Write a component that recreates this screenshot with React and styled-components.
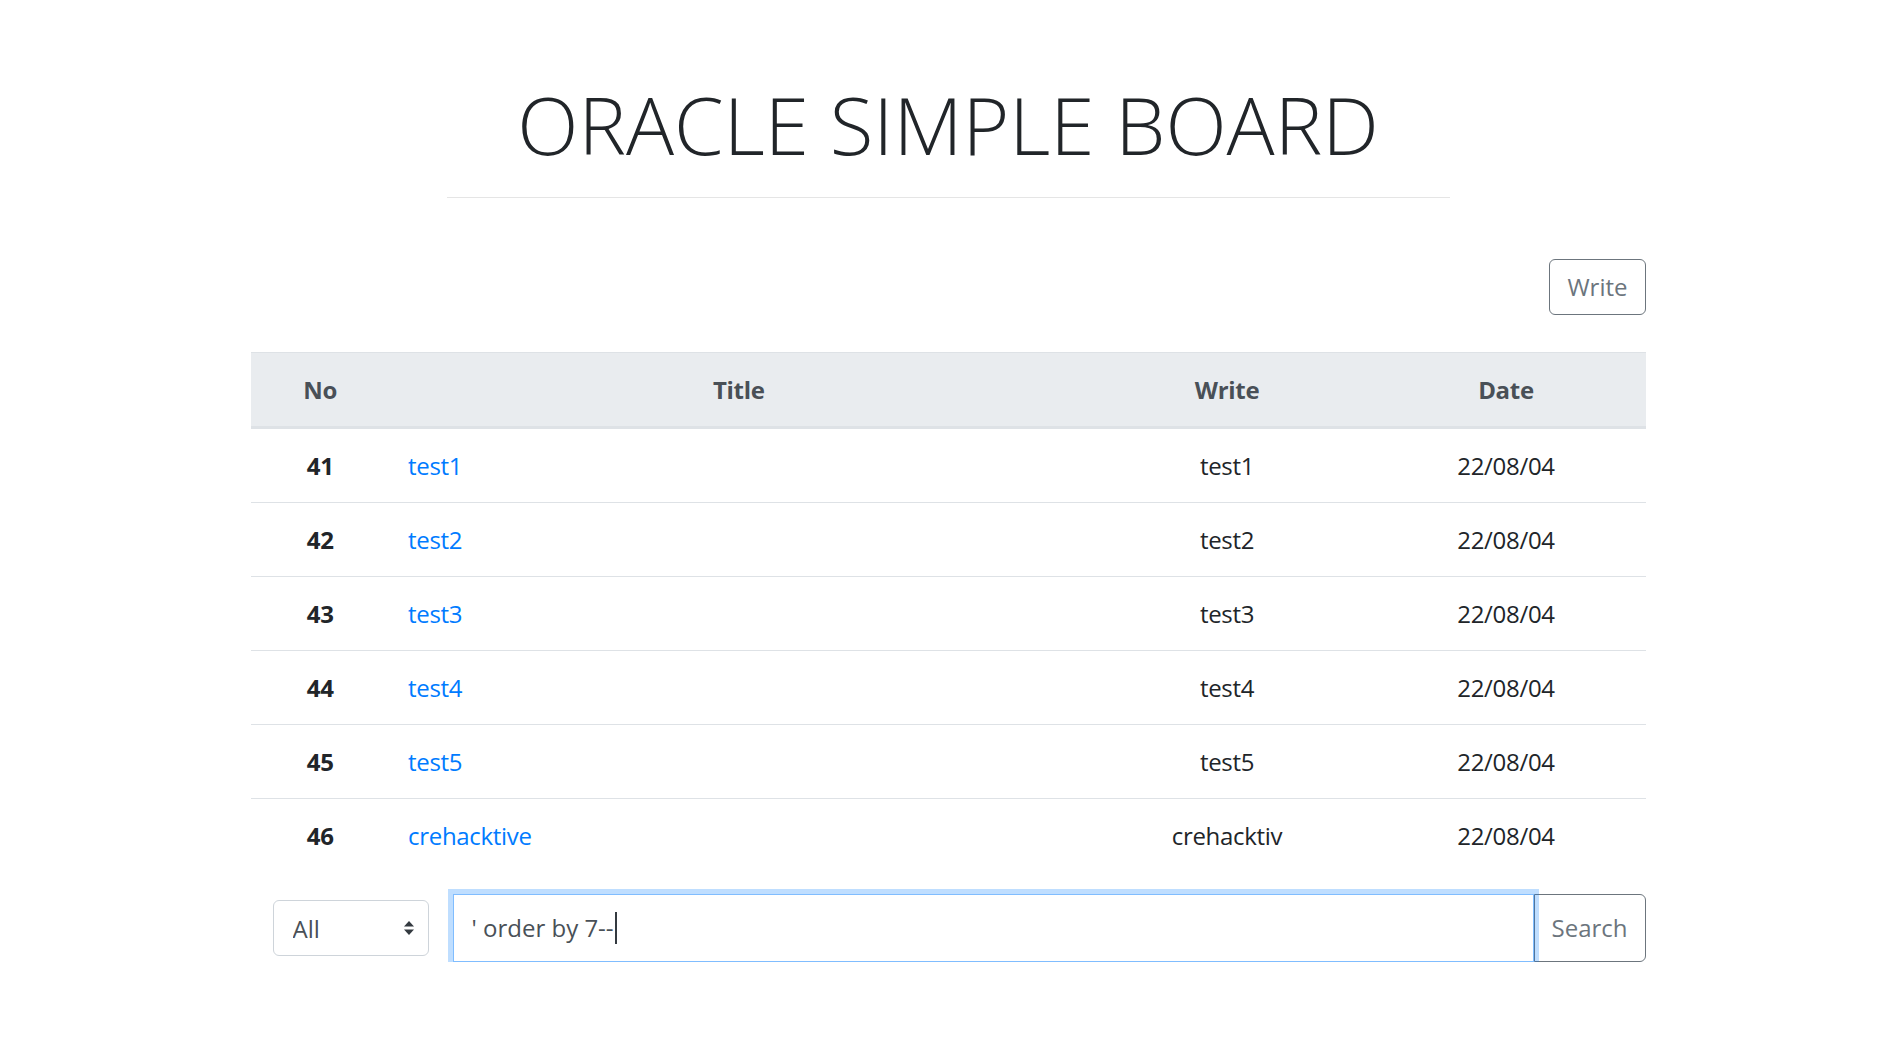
import React from "react";
import styled, { createGlobalStyle } from "styled-components";

const GlobalStyle = createGlobalStyle`
  html, body { margin: 0; padding: 0; background: #fff; }
  body {
    font-family: "Open Sans", "Noto Sans", "Liberation Sans", sans-serif;
    color: #212529;
    font-size: 24px;
    line-height: 1.5;
  }
  * { box-sizing: border-box; }
`;

const Page = styled.div`
  width: 1395px;
  margin: 0 auto;
  padding-top: 76px;
`;

const Header = styled.header`
  display: flex;
  flex-direction: column;
  align-items: center;
`;

const Title = styled.h1`
  margin: 0;
  font-size: 80px;
  font-weight: 300;
  line-height: 1.2;
  color: #212529;
`;

const Rule = styled.hr`
  width: 1003px;
  margin: 25px 0 0;
  border: 0;
  border-top: 1px solid rgba(0, 0, 0, 0.1);
`;

const Toolbar = styled.div`
  display: flex;
  justify-content: flex-end;
  margin-top: 61px;
  margin-bottom: 37px;
`;

const OutlineButton = styled.button`
  font-family: inherit;
  font-size: 24px;
  line-height: 36px;
  color: #6c757d;
  background: #fff;
  border: 1px solid #6c757d;
  border-radius: ${(p) => (p.$attached ? "0 6px 6px 0" : "6px")};
  padding: 9px 17px;
  height: ${(p) => p.$height || 56}px;
  cursor: pointer;
`;

const Table = styled.table`
  width: 100%;
  border-collapse: collapse;
  table-layout: fixed;
  letter-spacing: -0.3px;
`;

const HeadCell = styled.th`
  width: ${(p) => p.$w};
  background: #e9ecef;
  color: #495057;
  font-weight: 700;
  text-align: center;
  padding: 18px;
  line-height: 37px;
  border-top: 1px solid #dee2e6;
  border-bottom: 3px solid #dee2e6;
`;

const Row = styled.tr`
  & + & > * { border-top: 1px solid #dee2e6; }
`;

const NumCell = styled.th`
  font-weight: 700;
  text-align: center;
  padding: 18px;
  line-height: 37px;
`;

const Cell = styled.td`
  text-align: ${(p) => p.$align || "center"};
  padding: 18px;
  line-height: 37px;
`;

const TitleLink = styled.a`
  color: #007bff;
  text-decoration: none;
`;

const SearchBar = styled.form`
  display: flex;
  align-items: center;
  margin-top: 22px;
  padding-left: 22px;
  gap: 24px;
`;

const SelectWrap = styled.div`
  position: relative;
  width: 156px;
  height: 56px;
  flex: none;
`;

const Select = styled.select`
  appearance: none;
  width: 100%;
  height: 100%;
  font-family: inherit;
  font-size: 24px;
  color: #495057;
  background: #fff;
  border: 1px solid #ced4da;
  border-radius: 6px;
  padding: 0 40px 0 19px;
`;

const SelectArrows = styled.svg`
  position: absolute;
  right: 14px;
  top: 50%;
  transform: translateY(-50%);
  pointer-events: none;
`;

const InputGroup = styled.div`
  flex: 1;
  display: flex;
  align-items: stretch;
  height: 68px;
`;

const FakeInput = styled.div`
  flex: 1;
  display: flex;
  align-items: center;
  padding: 0 18px;
  font-size: 24px;
  color: #495057;
  background: #fff;
  border: 1px solid #80bdff;
  box-shadow: 0 0 0 5px rgba(0, 123, 255, 0.25);
  position: relative;
  z-index: 1;
  white-space: pre;
`;

const Caret = styled.span`
  display: inline-block;
  width: 2px;
  height: 32px;
  background: #343a40;
  margin-left: 1px;
`;

const rows = [
  { no: 41, title: "test1", writer: "test1", date: "22/08/04" },
  { no: 42, title: "test2", writer: "test2", date: "22/08/04" },
  { no: 43, title: "test3", writer: "test3", date: "22/08/04" },
  { no: 44, title: "test4", writer: "test4", date: "22/08/04" },
  { no: 45, title: "test5", writer: "test5", date: "22/08/04" },
  { no: 46, title: "crehacktive", writer: "crehacktiv", date: "22/08/04" },
];

export default function App() {
  return (
    <>
      <GlobalStyle />
      <Page>
        <Header>
          <Title>ORACLE SIMPLE BOARD</Title>
          <Rule />
        </Header>
        <Toolbar>
          <OutlineButton type="button">Write</OutlineButton>
        </Toolbar>
        <Table>
          <thead>
            <tr>
              <HeadCell $w="10%">No</HeadCell>
              <HeadCell $w="50%">Title</HeadCell>
              <HeadCell $w="20%">Write</HeadCell>
              <HeadCell $w="20%">Date</HeadCell>
            </tr>
          </thead>
          <tbody>
            {rows.map((r) => (
              <Row key={r.no}>
                <NumCell scope="row">{r.no}</NumCell>
                <Cell $align="left">
                  <TitleLink href="#">{r.title}</TitleLink>
                </Cell>
                <Cell>{r.writer}</Cell>
                <Cell>{r.date}</Cell>
              </Row>
            ))}
          </tbody>
        </Table>
        <SearchBar onSubmit={(e) => e.preventDefault()}>
          <SelectWrap>
            <Select defaultValue="all">
              <option value="all">All</option>
              <option value="title">Title</option>
              <option value="writer">Write</option>
            </Select>
            <SelectArrows width="12" height="16" viewBox="0 0 12 16">
              <path d="M6 1 L11 6.5 H1 Z" fill="#343a40" />
              <path d="M6 15 L11 9.5 H1 Z" fill="#343a40" />
            </SelectArrows>
          </SelectWrap>
          <InputGroup>
            <FakeInput role="textbox">
              {"' order by 7--"}
              <Caret />
            </FakeInput>
            <OutlineButton type="submit" $attached $height={68}>
              Search
            </OutlineButton>
          </InputGroup>
        </SearchBar>
      </Page>
    </>
  );
}
